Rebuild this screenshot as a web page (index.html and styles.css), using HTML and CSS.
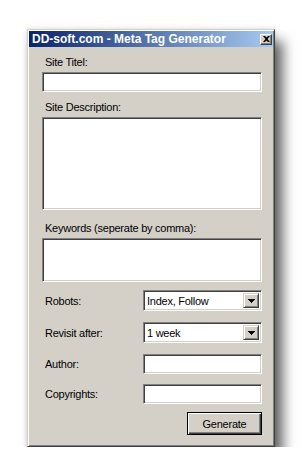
FILE: index.html
```html
<!DOCTYPE html>
<html lang="en">
<head>
  <meta charset="UTF-8" />
  <meta name="viewport" content="width=device-width, initial-scale=1.0">
  <title>DD-soft.com - Meta Tag Generator</title>
  <link rel="stylesheet" href="styles.css">
</head>
<body>

  <div class="window">
    <div class="titlebar">
      <span class="title">DD-soft.com - Meta Tag Generator</span>
      <span class="close">
        <svg width="7" height="6" viewBox="0 0 7 6"><path d="M0 0h2l1.5 1.5L5 0h2L4.5 3 7 6H5L3.5 4.5 2 6H0l2.5-3z" fill="#000"/></svg>
      </span>
    </div>

    <form class="content" id="metaForm">
      <label class="lbl" for="title">Site Titel:</label>
      <input class="sunken wide" type="text" id="title" />

      <label class="lbl lbl-desc" for="desc">Site Description:</label>
      <textarea class="sunken wide desc" id="desc"></textarea>

      <label class="lbl lbl-keys" for="keys">Keywords (seperate by comma):</label>
      <textarea class="sunken wide keys" id="keys"></textarea>

      <!-- выпадающие списки -->
      <div class="row row-robots">
        <span class="row-label">Robots:</span>
        <div class="sunken combo">
          <span class="combo-value">Index, Follow</span>
          <span class="arrow"><svg width="7" height="4" viewBox="0 0 7 4"><path d="M0 0h7v1H0zM1 1h5v1H1zM2 2h3v1H2zM3 3h1v1H3z" fill="#000"/></svg></span>
        </div>
      </div>

      <div class="row row-revisit">
        <span class="row-label">Revisit after:</span>
        <div class="sunken combo">
          <span class="combo-value">1 week</span>
          <span class="arrow"><svg width="7" height="4" viewBox="0 0 7 4"><path d="M0 0h7v1H0zM1 1h5v1H1zM2 2h3v1H2zM3 3h1v1H3z" fill="#000"/></svg></span>
        </div>
      </div>

      <div class="row row-author">
        <label class="row-label" for="author">Author:</label>
        <input class="sunken small" type="text" id="author" />
      </div>

      <div class="row row-copy">
        <label class="row-label" for="copy">Copyrights:</label>
        <input class="sunken small" type="text" id="copy" />
      </div>

      <div class="actions">
        <button type="button" class="btn-generate">Generate</button>
      </div>
    </form>
  </div>

</body>
</html>
```

FILE: styles.css
```css
body {
  margin: 0;
  background-color: #fff;
  font-family: "Liberation Sans", Arial, sans-serif;
  font-size: 11px;
  letter-spacing: -0.25px;
  color: #000;
}

.window {
  width: 248px;
  height: 418px;
  margin: 29px 0 0 27px;
  padding: 1px;
  box-sizing: border-box;
  background-color: #d4d0c8;
  border: 1px solid;
  border-color: #d4d0c8 #404040 #404040 #d4d0c8;
  box-shadow: inset 1px 1px #fff, inset -1px -1px #808080,
    8px 12px 12px rgba(0, 0, 0, 0.6), 0 0 5px rgba(0, 0, 0, 0.15);
}

.titlebar {
  height: 16px;
  display: flex;
  align-items: center;
  justify-content: space-between;
  padding: 0 1px 0 3px;
  background: linear-gradient(to right, #0a246a, #a6caf0);
}

.title {
  font-weight: bold;
  font-size: 12px;
  letter-spacing: 0;
  color: #fff;
  white-space: nowrap;
}

.close {
  width: 12px;
  height: 11px;
  box-sizing: border-box;
  display: flex;
  align-items: center;
  justify-content: center;
  background-color: #d4d0c8;
  border: 1px solid;
  border-color: #fff #404040 #404040 #fff;
  box-shadow: inset -1px -1px #808080;
}

.content {
  margin: 0;
  padding: 9px 11px 0 13px;
}

.lbl {
  display: block;
  height: 13px;
  line-height: 13px;
  padding-left: 3px;
  margin-bottom: 3px;
}

.lbl-desc {
  margin-top: 9px;
}

.lbl-keys {
  margin-top: 12px;
}

.sunken {
  box-sizing: border-box;
  background-color: #fff;
  border: 1px solid;
  border-color: #808080 #fff #fff #808080;
  box-shadow: inset 1px 1px #404040, inset -1px -1px #d4d0c8;
  outline: none;
  font: inherit;
  margin: 0;
}

.wide {
  display: block;
  width: 220px;
  height: 20px;
  resize: none;
}

.desc {
  height: 93px;
}

.keys {
  height: 44px;
}

.row {
  display: flex;
  align-items: center;
}

.row-label {
  width: 101px;
  padding-left: 3px;
  box-sizing: border-box;
}

.row-robots {
  margin-top: 8px;
}

.row-revisit,
.row-author {
  margin-top: 11px;
}

.row-copy {
  margin-top: 10px;
}

.combo {
  width: 119px;
  height: 21px;
  padding: 2px;
  display: flex;
  align-items: center;
}

.combo-value {
  flex: 1;
  padding-left: 1px;
  white-space: nowrap;
}

.arrow {
  width: 16px;
  align-self: stretch;
  box-sizing: border-box;
  display: flex;
  align-items: center;
  justify-content: center;
  background-color: #d4d0c8;
  border: 1px solid;
  border-color: #d4d0c8 #404040 #404040 #d4d0c8;
  box-shadow: inset 1px 1px #fff, inset -1px -1px #808080;
}

.small {
  width: 119px;
  height: 20px;
}

.actions {
  display: flex;
  justify-content: flex-end;
  margin-top: 8px;
}

.btn-generate {
  width: 75px;
  height: 23px;
  padding: 0;
  font: inherit;
  letter-spacing: inherit;
  color: #000;
  background-color: #d4d0c8;
  border: 1px solid #000;
  box-shadow: inset 1px 1px #fff, inset -1px -1px #404040, inset -2px -2px #808080;
  cursor: pointer;
}
```
